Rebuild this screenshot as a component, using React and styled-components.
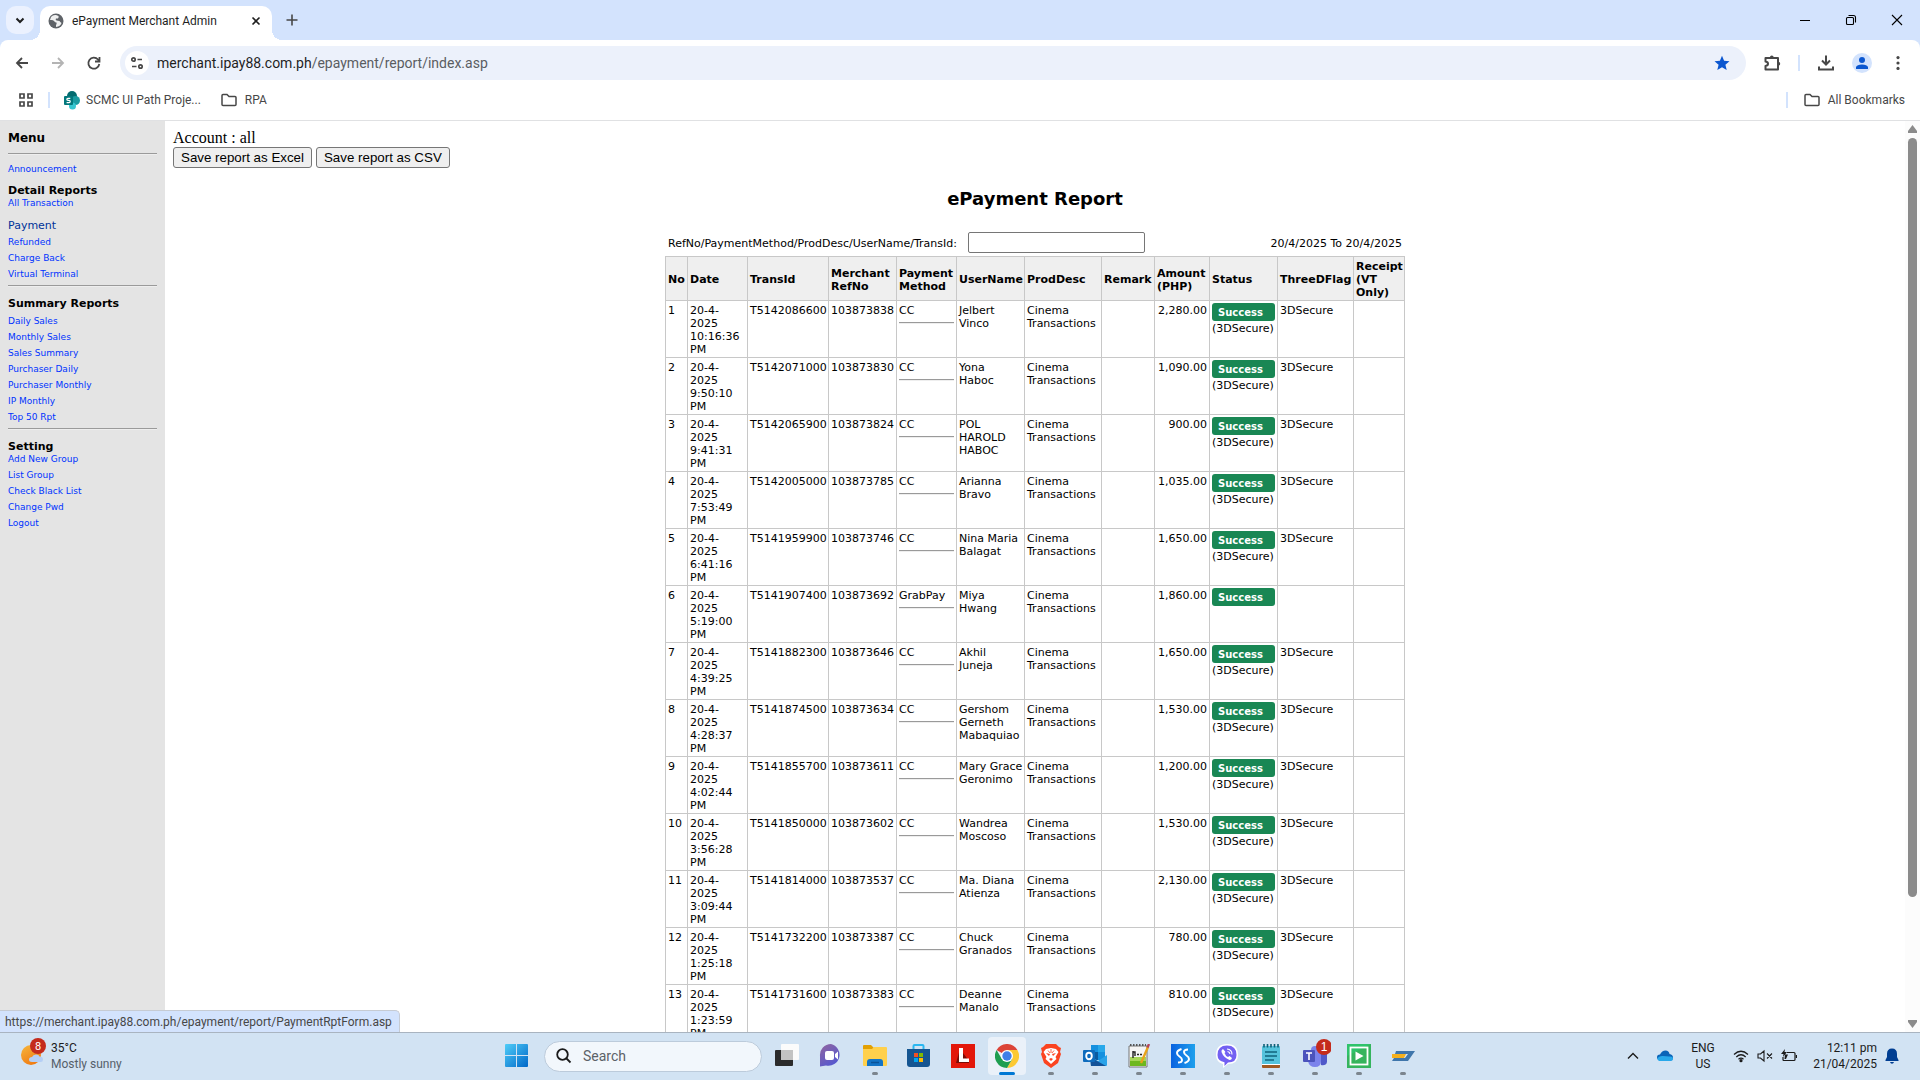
import React from "react";
import styled, { createGlobalStyle } from "styled-components";

const UI = `Roboto, "Noto Sans", sans-serif`;
const VERDANA = `"DejaVu Sans", sans-serif`;

const GlobalStyle = createGlobalStyle`
  * { box-sizing: border-box; }
  body { margin: 0; background: #fff; overflow: hidden; }
  a { text-decoration: none; }
  svg { display: block; flex: none; }
`;

/* ---------- browser chrome ---------- */

const Window = styled.div`
  display: flex;
  flex-direction: column;
  height: 100vh;
  background: #d3e3fd;
  font-family: ${UI};
`;

const TabStrip = styled.header`
  display: flex;
  align-items: flex-end;
  height: 40px;
  padding-left: 6px;
  flex: none;
`;

const IconButton = styled.button`
  display: flex;
  align-items: center;
  justify-content: center;
  width: ${(p) => p.$w || 28}px;
  height: ${(p) => p.$h || 28}px;
  padding: 0;
  border: 0;
  border-radius: ${(p) => (p.$round ? "50%" : "0")};
  background: ${(p) => p.$bg || "transparent"};
  color: ${(p) => p.$color || "#474747"};
  flex: none;
`;

const TabSearch = styled(IconButton)`
  align-self: center;
  margin-right: 6px;
  border-radius: 10px;
`;

const Tab = styled.div`
  position: relative;
  display: flex;
  align-items: center;
  width: 232px;
  height: 34px;
  padding: 0 4px 4px 8px;
  border-radius: 10px 10px 0 0;
  background: #fff;
  color: #1f1f1f;
  font-size: 12px;
  line-height: 16px;

  &::before,
  &::after {
    content: "";
    position: absolute;
    bottom: 0;
    width: 10px;
    height: 10px;
  }
  &::before {
    left: -10px;
    background: radial-gradient(circle at 0 0, transparent 10px, #fff 10px);
  }
  &::after {
    right: -10px;
    background: radial-gradient(circle at 100% 0, transparent 10px, #fff 10px);
  }
`;

const TabTitle = styled.span`
  flex: 1;
  margin-left: 8px;
  white-space: nowrap;
`;

const NewTab = styled(IconButton)`
  align-self: center;
  margin-left: 6px;
`;

const WindowControls = styled.div`
  display: flex;
  margin-left: auto;
  height: 40px;
`;

const Toolbar = styled.div`
  display: flex;
  align-items: center;
  height: 46px;
  padding: 0 4px 0 4px;
  border-radius: 8px 8px 0 0;
  background: #fff;
  flex: none;
`;

const NavGroup = styled.div`
  display: flex;
  gap: 0;
  width: 116px;
`;

const AddressBar = styled.div`
  position: relative;
  display: flex;
  align-items: center;
  flex: 1;
  height: 34px;
  padding: 0 10px 0 5px;
  border-radius: 17px;
  background: #ecf1fb;
`;

const UrlInput = styled.input`
  flex: 1;
  height: 24px;
  margin-left: 8px;
  padding: 0;
  border: 0;
  outline: 0;
  background: transparent;
  color: transparent;
  font: 14px/20px ${UI};
`;

const UrlText = styled.label`
  position: absolute;
  left: 37px;
  color: #5a5d62;
  font-size: 14px;
  line-height: 20px;
  white-space: nowrap;

  b {
    color: #1f1f1f;
    font-weight: 400;
  }
`;

const Actions = styled.div`
  display: flex;
  align-items: center;
  margin-left: 8px;
`;

const Divider = styled.span`
  width: 2px;
  height: 16px;
  margin: ${(p) => p.$m || "0"};
  background: #d3e3fd;
`;

const BookmarksBar = styled.nav`
  display: flex;
  align-items: center;
  height: 35px;
  padding: 0 15px 6px 18px;
  border-bottom: 1px solid #e0e1e3;
  background: #fff;
  flex: none;
`;

const Bookmark = styled.a`
  display: flex;
  align-items: center;
  gap: ${(p) => p.$gap || 6}px;
  margin-left: ${(p) => p.$ml || 0}px;
  color: #474747;
  font-size: 12px;
  line-height: 16px;
  white-space: nowrap;
`;

const Spacer = styled.span`
  flex: 1;
`;

/* ---------- page ---------- */

const Page = styled.div`
  position: relative;
  display: flex;
  flex: 1;
  min-height: 0;
  overflow: hidden;
  background: #fff;
  color: #000;
`;

const Sidebar = styled.nav`
  width: 165px;
  padding: 9px 8px;
  background: #e4e4e4;
  font-family: ${VERDANA};
  flex: none;
`;

const MenuTitle = styled.h1`
  margin: 0;
  font-size: 12px;
  line-height: 16px;
`;

const Rule = styled.hr`
  height: 2px;
  margin: ${(p) => p.$m};
  border: 0;
  border-top: 1px solid #9a9a9a;
  border-bottom: 1px solid #eee;
`;

const SectionTitle = styled.h2`
  margin: 0 0 ${(p) => p.$mb || 0}px;
  font-size: 11px;
  line-height: 12px;
  white-space: nowrap;
`;

const Links = styled.ul`
  display: flex;
  flex-direction: column;
  gap: 4px;
  margin: 0 0 ${(p) => p.$mb || 0}px;
  padding: 0;
  list-style: none;
`;

const LinkItem = styled.li`
  height: 12px;
  font-size: 9px;
  line-height: 12px;
  white-space: nowrap;

  a {
    color: #0033ff;
  }
`;

const CurrentLink = styled.a`
  display: block;
  margin-bottom: 4px;
  color: #003399;
  font-size: 11px;
  line-height: 12px;
`;

const Main = styled.main`
  flex: 1;
  min-width: 0;
  padding: 8px;
  overflow: hidden;
`;

const Account = styled.p`
  margin: 0;
  font: 16px/18px "Liberation Serif", serif;
`;

const ExportBar = styled.div`
  display: flex;
  gap: 4px;
`;

const ExportButton = styled.button`
  height: 21px;
  padding: 0 7px;
  border: 1px solid #767676;
  border-radius: 3px;
  background: #efefef;
  color: #000;
  font-family: "Liberation Sans", sans-serif;
`;

const Report = styled.section`
  width: 740px;
  margin: 20px auto 0;
  font: 11px/13px ${VERDANA};
`;

const ReportTitle = styled.h2`
  margin: 0 0 22px;
  font-size: 18px;
  line-height: 22px;
  text-align: center;
`;

const FilterRow = styled.div`
  display: flex;
  align-items: center;
  gap: 4px;
  margin-bottom: 3px;
  padding: 0 3px;
`;

const FilterLabel = styled.label`
  width: 296px;
  padding-top: 1px;
`;

const FilterInput = styled.input`
  width: 177px;
  height: 21px;
  border: 1px solid #767676;
  border-radius: 2px;
  background: #fff;
`;

const DateRange = styled.span`
  margin-left: auto;
  padding-top: 1px;
`;

const Table = styled.table`
  width: 739px;
  border-collapse: collapse;
  table-layout: fixed;

  th,
  td {
    padding: 3px 0 1px 2px;
    border: 1px solid #c8c8c8;
    text-align: left;
    white-space: pre;
  }
  th {
    background: #efefef;
  }
  td {
    height: 57px;
    vertical-align: top;
  }
`;

const AmountCell = styled.td`
  && {
    padding-right: 2px;
    text-align: right;
  }
`;

const MethodRule = styled.hr`
  height: 2px;
  margin: 5px 2px 0 0;
  border: 0;
  border-top: 1px solid #9a9a9a;
  border-bottom: 1px solid #eee;
`;

const Badge = styled.span`
  display: block;
  width: 63px;
  height: 18px;
  margin: -1px 0 1px;
  padding: 1px 6px 0;
  border-radius: 3px;
  background: #198754;
  color: #fff;
  font-size: 10px;
  font-weight: 700;
  line-height: 18px;
`;

const ScrollTrack = styled.div`
  display: flex;
  flex-direction: column;
  align-items: center;
  width: 15px;
  padding: 4px 0;
  background: #fcfcfc;
  flex: none;
`;

const ScrollThumb = styled.div`
  width: 9px;
  height: 84%;
  margin: 5px 0 auto;
  border-radius: 5px;
  background: #8b8b8b;
`;

const StatusBubble = styled.div`
  position: absolute;
  left: 0;
  bottom: 0;
  height: 22px;
  padding: 0 7px 0 5px;
  border: 1px solid #c6cbd3;
  border-width: 1px 1px 0 0;
  border-radius: 0 5px 0 0;
  background: #d3e3fd;
  color: #474747;
  font-size: 12px;
  line-height: 22px;
`;

/* ---------- taskbar ---------- */

const Taskbar = styled.footer`
  display: grid;
  grid-template-columns: 1fr auto 1fr;
  height: 48px;
  padding-bottom: 1px;
  border-top: 1px solid #a9b4c0;
  background: #d2e3f3;
  color: #1b1b1b;
  font-size: 12px;
  line-height: 16px;
  flex: none;
`;

const Weather = styled.div`
  display: flex;
  align-items: center;
  gap: 5px;
  padding-left: 20px;
`;

const Stack = styled.div`
  text-align: ${(p) => p.$align || "left"};
  width: ${(p) => (p.$w ? p.$w + "px" : "auto")};
  white-space: nowrap;

  span {
    display: block;
  }
`;

const Muted = styled.span`
  color: #55606a;
`;

const Apps = styled.div`
  display: flex;
  align-items: center;
`;

const AppButton = styled.button`
  position: relative;
  display: flex;
  align-items: center;
  justify-content: center;
  width: 38px;
  height: 38px;
  margin: 0 3px;
  padding: 0;
  border: 0;
  border-radius: 4px;
  background: ${(p) => (p.$active ? "#eaf1f9" : "transparent")};

  &::after {
    content: "";
    position: absolute;
    bottom: 0;
    width: ${(p) => (p.$active ? 16 : p.$running ? 6 : 0)}px;
    height: 3px;
    border-radius: 2px;
    background: ${(p) => (p.$active ? "#0078d4" : "#7c858e")};
  }
`;

const SearchBox = styled.label`
  display: flex;
  align-items: center;
  gap: 11px;
  width: 218px;
  height: 31px;
  margin: 0 3px 0 5px;
  padding: 0 11px;
  border: 1px solid #bccbdb;
  border-radius: 16px;
  background: #f2f7fc;

  input {
    width: 150px;
    padding: 0;
    border: 0;
    outline: 0;
    background: transparent;
    font: 14px/20px ${UI};
  }
  input::placeholder {
    color: #5c6268;
    opacity: 1;
  }
`;

const Tray = styled.div`
  display: flex;
  align-items: center;
  justify-content: flex-end;
  padding-right: 21px;
`;

const TrayIcons = styled.div`
  display: flex;
  align-items: center;
  gap: ${(p) => p.$gap}px;
  margin: 0 ${(p) => p.$mr}px 0 ${(p) => p.$ml || 0}px;
`;

const Notifications = styled(IconButton)`
  margin-left: 8px;
`;

/* ---------- data ---------- */

const detailLinks = ["Refunded", "Charge Back", "Virtual Terminal"];
const summaryLinks = ["Daily Sales", "Monthly Sales", "Sales Summary", "Purchaser Daily", "Purchaser Monthly", "IP Monthly", "Top 50 Rpt"];
const settingLinks = ["Add New Group", "List Group", "Check Black List", "Change Pwd", "Logout"];

const columns = [
  ["No", 22], ["Date", 60], ["TransId", 81], ["Merchant\nRefNo", 68], ["Payment\nMethod", 60], ["UserName", 68],
  ["ProdDesc", 77], ["Remark", 53], ["Amount\n(PHP)", 55], ["Status", 68], ["ThreeDFlag", 76], ["Receipt\n(VT\nOnly)", 51],
];

const rows = [
  ["10:16:36", "T5142086600", "103873838", "CC", "Jelbert\nVinco", "2,280.00"],
  ["9:50:10", "T5142071000", "103873830", "CC", "Yona\nHaboc", "1,090.00"],
  ["9:41:31", "T5142065900", "103873824", "CC", "POL\nHAROLD\nHABOC", "900.00"],
  ["7:53:49", "T5142005000", "103873785", "CC", "Arianna\nBravo", "1,035.00"],
  ["6:41:16", "T5141959900", "103873746", "CC", "Nina Maria\nBalagat", "1,650.00"],
  ["5:19:00", "T5141907400", "103873692", "GrabPay", "Miya\nHwang", "1,860.00"],
  ["4:39:25", "T5141882300", "103873646", "CC", "Akhil\nJuneja", "1,650.00"],
  ["4:28:37", "T5141874500", "103873634", "CC", "Gershom\nGerneth\nMabaquiao", "1,530.00"],
  ["4:02:44", "T5141855700", "103873611", "CC", "Mary Grace\nGeronimo", "1,200.00"],
  ["3:56:28", "T5141850000", "103873602", "CC", "Wandrea\nMoscoso", "1,530.00"],
  ["3:09:44", "T5141814000", "103873537", "CC", "Ma. Diana\nAtienza", "2,130.00"],
  ["1:25:18", "T5141732200", "103873387", "CC", "Chuck\nGranados", "780.00"],
  ["1:23:59", "T5141731600", "103873383", "CC", "Deanne\nManalo", "810.00"],
];

/* ---------- icons ---------- */

const Line = ({ d, size = 16, w = 2, children, ...rest }) => (
  <svg width={size} height={size} viewBox={`0 0 ${size} ${size}`} fill="none" stroke="currentColor" strokeWidth={w} {...rest}>
    <path d={d} />
    {children}
  </svg>
);

const Folder = () => (
  <Line d="M1 3.5Q1 2.5 2 2.5H6L8 4.5H14Q15 4.5 15 5.5V12.5Q15 13.5 14 13.5H2Q1 13.5 1 12.5Z" w={1.5} />
);

const Globe = () => (
  <svg width="16" height="16" viewBox="0 0 16 16">
    <circle cx="8" cy="8" r="7.5" fill="#5f6368" />
    <path d="M8 2Q5 1.500 3 4L2 7Q5 6.500 6 8T8.500 9.500Q9 11 8 12L8 14Q12.500 13.500 13.500 10Q12 9 11.500 8L8.500 7.500Q7 6.500 8 5.500H10Q11 4 10.500 3Z" fill="#fff" opacity=".9" />
  </svg>
);

const SharePoint = () => (
  <svg width="16" height="19" viewBox="0 0 16 19">
    <circle cx="8" cy="5" r="5" fill="#036c70" />
    <circle cx="11.500" cy="9.500" r="4.500" fill="#1a9ba1" />
    <circle cx="8.500" cy="15" r="3.500" fill="#37c6d0" />
    <rect y="5" width="9" height="9" rx="1" fill="#03787c" />
    <path d="M6.300 7.300H4Q2.800 7.300 2.800 8.300T4 9.400H5Q6.200 9.400 6.200 10.500T5 11.700H2.600" fill="none" stroke="#fff" strokeWidth="1.200" />
  </svg>
);

const Puzzle = () => (
  <Line size={18} w={2} d="M2.500 4H15V15.500H2.500V12Q5 11.500 5 9.700T2.500 7.500Z" strokeLinejoin="round">
    <path d="M7 3Q7 1.500 8.800 1.500T10.600 3ZM16 8Q17.200 8 17.200 9.700T16 11.500Z" fill="currentColor" stroke="none" />
  </Line>
);

const WeatherIcon = () => (
  <svg width="26" height="36" viewBox="0 0 26 36">
    <defs>
      <linearGradient id="sun" x1="0" y1="0" x2=".5" y2="1"><stop stopColor="#f6b73c" /><stop offset="1" stopColor="#f07d13" /></linearGradient>
    </defs>
    <circle cx="11" cy="17" r="10" fill="url(#sun)" />
    <path d="M12 24Q9 24 9 21.500T12 19Q13 16.500 16 16.500T19.500 18.500Q23 18.500 23 21.500T20 24Z" fill="#b5cff5" />
    <circle cx="18" cy="8" r="8" fill="#c42b1c" />
    <text x="18" y="12" textAnchor="middle" fill="#fff" fontSize="11">8</text>
  </svg>
);

const appIcons = {
  start: (
    <>
      <defs><linearGradient id="win" x1="0" y1="0" x2="1" y2="1"><stop stopColor="#4fcdf8" /><stop offset="1" stopColor="#0067c8" /></linearGradient></defs>
      <path d="M1 0H11V11H0V1Q0 0 1 0ZM12 0H22Q23 0 23 1V11H12ZM0 12H11V23H1Q0 23 0 22ZM12 12H23V22Q23 23 22 23H12Z" fill="url(#win)" />
    </>
  ),
  task: (
    <>
      <rect y="6" width="18" height="16" rx="1" fill="#2b2b2b" />
      <rect x="6" width="18" height="16" rx="1" fill="#fbfbfb" />
      <rect x="6" y="6" width="12" height="10" fill="#c3c3c3" />
    </>
  ),
  chat: (
    <>
      <defs><linearGradient id="chat" x1="0" y1="0" x2=".6" y2="1"><stop stopColor="#92669f" /><stop offset="1" stopColor="#5558cf" /></linearGradient></defs>
      <path d="M12 0A11 11 0 1 1 7 21.500L1 22.500V12A11 11 0 0 1 12 0Z" fill="url(#chat)" />
      <rect x="6" y="7" width="9" height="9" rx="2" fill="#fff" /><path d="M16 10L19 7.500V15.500L16 13Z" fill="#fff" />
    </>
  ),
  files: (
    <>
      <path d="M0 2Q0 1 1 1H8L11 4H23Q24 4 24 5V12H0Z" fill="#e3a002" />
      <path d="M0 5H9L11 3H23Q24 3 24 4V21Q24 22 23 22H1Q0 22 0 21Z" fill="#ffd04c" />
      <path d="M4 22V18Q4 15 7 15H17Q20 15 20 18V22Z" fill="#1374c6" /><path d="M8 18.500H16" stroke="#0a5398" strokeWidth="1.500" />
    </>
  ),
  store: (
    <>
      <path d="M6.500 6V2Q6.500 1 7.500 1H15.500Q16.500 1 16.500 2V6" fill="none" stroke="#2bb7f0" strokeWidth="2" />
      <path d="M0 5H23V20Q23 23 20 23H3Q0 23 0 20Z" fill="#155591" />
      <path d="M7 9H11V13H7Z" fill="#f25022" /><path d="M12 9H16V13H12Z" fill="#7fba00" />
      <path d="M7 14H11V18H7Z" fill="#00a4ef" /><path d="M12 14H16V18H12Z" fill="#ffb900" />
    </>
  ),
  lred: (
    <>
      <rect width="24" height="24" fill="#e3170a" />
      <path d="M9 5L5 19H18V17Z" fill="#7a0c05" /><path d="M8 4H12V14.500H18V18H8Z" fill="#fff" />
    </>
  ),
  chrome: (
    <>
      <path d="M12 12L1.600 6A12 12 0 0 1 22.400 6Z" fill="#dc4437" />
      <path d="M12 6H22.400A12 12 0 0 1 12 24L17.200 15Z" fill="#fcc934" />
      <path d="M6.800 15L1.600 6A12 12 0 0 0 12 24L17.200 15Z" fill="#1e9e50" />
      <circle cx="12" cy="12" r="6" fill="#fff" /><circle cx="12" cy="12" r="4.700" fill="#3f7fe8" />
    </>
  ),
  brave: (
    <>
      <path d="M7 0H17L20 3L22 4L21 8L22 10L19 19L12 24L5 19L2 10L3 8L2 4L4 3Z" fill="#fb4420" />
      <path d="M7 5L12 4L17 5L19.500 8L16.500 13L17.500 15L12 20L6.500 15L7.500 13L4.500 8Z" fill="#fff" />
      <path d="M7 9L11 10L10 12ZM17 9L13 10L14 12ZM10 15L12 14L14 15L12 17Z" fill="#fb4420" />
      <path d="M12 5V9M9 6.500L11 9M15 6.500L13 9" stroke="#fb4420" strokeWidth=".8" />
    </>
  ),
  outlook: (
    <>
      <rect x="8" y="1" width="14" height="15" fill="#1490df" /><path d="M15 1H22V8H15Z" fill="#28a8ea" />
      <path d="M8 8H15V16H8Z" fill="#0b5a9f" /><path d="M7 12L15 17L24 11V21Q24 22 23 22H8Z" fill="#2ba3e8" /><path d="M7 13L23 22H8Z" fill="#135298" />
      <rect y="6" width="12" height="12" rx="1" fill="#0f6cbd" /><ellipse cx="6" cy="12" rx="2.800" ry="3.200" fill="none" stroke="#fff" strokeWidth="1.900" />
    </>
  ),
  npp: (
    <>
      <path d="M2 2H20V23H2Z" fill="#f5f5f5" stroke="#777" /><path d="M3 13H19V22H3Z" fill="#6db81e" /><path d="M3 13H19V17H3Z" fill="#a5d656" />
      <path d="M3 1H19" stroke="#555" strokeWidth="2" strokeDasharray="1.500 1.500" />
      <path d="M6 14V7M6 8H8V12M10 10.500H12M13 10.500H15" stroke="#222" strokeWidth="1.400" fill="none" />
      <path d="M14 19L21 3" stroke="#e8a31b" strokeWidth="2.400" /><path d="M20.500 3.500L22 0" stroke="#b5445a" strokeWidth="2.400" />
    </>
  ),
  sblue: (
    <>
      <defs><linearGradient id="sb"><stop stopColor="#0a62e0" /><stop offset="1" stopColor="#1ea0ec" /></linearGradient></defs>
      <rect width="24" height="24" fill="url(#sb)" />
      <path d="M10.500 5Q6 6.500 6 9Q6 11 8.500 12.500Q11 14 11 16Q11 18.500 7 18.500M13.500 19Q18 17.500 18 15Q18 13 15.500 11.500Q13 10 13 8Q13 5.500 17 5.500" fill="none" stroke="#fff" strokeWidth="2" />
    </>
  ),
  viber: (
    <>
      <path d="M12 0Q23 0 23 11Q23 20 13 20L8 24V20Q1 18 1 11Q1 0 12 0Z" fill="#fff" />
      <path d="M12 1.500Q21.500 1.500 21.500 11Q21.500 18.500 13 18.500L9.500 22V18.200Q2.500 17 2.500 11Q2.500 1.500 12 1.500Z" fill="#7360f2" />
      <path d="M8 5Q6 6 6.500 8Q8.500 13.500 14.500 16Q16.500 16.200 17 14L14.500 12L13 13Q10.500 12 9.500 9L10.500 8Z" fill="#fff" />
      <path d="M12 5Q17 5.500 17 10.500M12.500 7.500Q14.800 8 15 10" fill="none" stroke="#fff" strokeWidth="1.100" />
    </>
  ),
  notepad: (
    <>
      <rect x="3" y="2" width="18" height="19" rx="1" fill="#55c3dc" /><path d="M3 21H21V23Q21 24 20 24H4Q3 24 3 23Z" fill="#a05a22" /><path d="M3 20.500H21" stroke="#fff" />
      <path d="M5 3.500V0M8.500 3.500V0M12 3.500V0M15.500 3.500V0M19 3.500V0" stroke="#0f5f76" strokeWidth="1.600" />
      <path d="M6 8H18M6 12H18M6 16H15" stroke="#11647c" strokeWidth="1.600" />
    </>
  ),
  camtasia: (
    <>
      <rect width="24" height="24" fill="#2fc36b" /><path d="M0 12L24 0V24H0Z" fill="#35b45d" />
      <rect x="3.500" y="3.500" width="17" height="17" fill="none" stroke="#fff" strokeWidth="1.800" /><path d="M8.500 7.500L16.500 12L8.500 16.500Z" fill="#fff" />
    </>
  ),
  swoosh: (
    <>
      <path d="M5 7H24L17 17H1L3 14H14L17 10H4Z" fill="#3f76ab" /><path d="M1 10H15L13 14H1Z" fill="#f5b01d" />
    </>
  ),
};

const AppIcon = ({ name }) => (
  <svg width="24" height="24" viewBox="0 0 24 24">{appIcons[name]}</svg>
);

const TeamsIcon = () => (
  <svg width="32" height="34" viewBox="0 0 32 34">
    <circle cx="16" cy="11" r="4" fill="#7b83eb" /><circle cx="25" cy="13" r="3" fill="#5059c9" />
    <path d="M21 14H28V23Q27 27 22 26Z" fill="#5059c9" /><path d="M10 14H22V22Q22 28 16 28T9 22Z" fill="#7b83eb" />
    <rect x="4" y="11" width="12" height="12" rx="1" fill="#4b53bc" /><path d="M7 14H13M10 14V21" stroke="#fff" strokeWidth="1.600" />
    <circle cx="25" cy="8" r="8" fill="#c42b1c" />
    <text x="25" y="12" textAnchor="middle" fill="#fff" fontSize="12">1</text>
  </svg>
);

const runningApps = [
  ["brave", "Brave"], ["outlook", "Outlook"], ["npp", "Notepad++"], ["sblue", "Capture"], ["viber", "Viber"], ["notepad", "Notepad"],
];

/* ---------- composition ---------- */

const NavLinks = ({ items, mb }) => (
  <Links $mb={mb}>
    {items.map((t) => (
      <LinkItem key={t}><a href="#">{t}</a></LinkItem>
    ))}
  </Links>
);

export default function App() {
  return (
    <Window>
      <GlobalStyle />
      <TabStrip>
        <TabSearch $bg="#ebf1fe" $color="#1f1f1f" aria-label="Search tabs">
          <Line d="M4.500 6.500L8 10L11.500 6.500" />
        </TabSearch>
        <Tab>
          <Globe />
          <TabTitle>ePayment Merchant Admin</TabTitle>
          <IconButton $w={24} $h={24} $color="#1f1f1f" aria-label="Close tab">
            <Line d="M4.500 4.500L11.500 11.500M11.500 4.500L4.500 11.500" w={1.6} />
          </IconButton>
        </Tab>
        <NewTab aria-label="New tab"><Line d="M8 2.500V13.500M2.500 8H13.500" w={1.6} /></NewTab>
        <WindowControls>
          <IconButton $w={46} $h={40} $color="#000" aria-label="Minimise"><Line d="M3 8.500H13" w={1} /></IconButton>
          <IconButton $w={46} $h={40} $color="#000" aria-label="Restore">
            <Line d="M3.500 6.500Q3.500 5.500 4.500 5.500H9.500Q10.500 5.500 10.500 6.500V11.500Q10.500 12.500 9.500 12.500H4.500Q3.500 12.500 3.500 11.500ZM5.500 3.500H10.500Q12.500 3.500 12.500 5.500V10.500" w={1.1} />
          </IconButton>
          <IconButton $w={46} $h={40} $color="#000" aria-label="Close"><Line d="M3 3L13 13M13 3L3 13" w={1.1} /></IconButton>
        </WindowControls>
      </TabStrip>

      <Toolbar>
        <NavGroup>
          <IconButton $w={36} aria-label="Back"><Line d="M14 8H3M8 3L3 8L8 13" w={1.8} /></IconButton>
          <IconButton $w={36} $color="#b4b4b4" aria-label="Forward"><Line d="M2 8H13M8 3L13 8L8 13" w={1.8} /></IconButton>
          <IconButton $w={36} aria-label="Reload"><Line d="M13.300 9A5.500 5.500 0 1 1 12 4.500L13.500 6M13.500 2V6.500H9" w={1.8} /></IconButton>
        </NavGroup>
        <AddressBar>
          <IconButton $w={24} $h={24} $round $bg="#fff" aria-label="Site information">
            <Line d="M8.500 4.500H13M3 11.500H7.500" w={1.7}>
              <circle cx="4.500" cy="4.500" r="1.700" /><circle cx="11.500" cy="11.500" r="1.700" />
            </Line>
          </IconButton>
          <UrlInput id="url" aria-label="Address" />
          <UrlText htmlFor="url"><b>merchant.ipay88.com.ph</b>/epayment/report/index.asp</UrlText>
          <IconButton $color="#0b57d0" aria-label="Bookmark this tab">
            <svg width="16" height="16" viewBox="0 0 16 16" fill="currentColor"><path d="M8 .8L10.100 5.700L15.500 6.200L11.400 9.700L12.700 15L8 12.200L3.300 15L4.600 9.700L.5 6.200L5.900 5.700Z" /></svg>
          </IconButton>
        </AddressBar>
        <Actions>
          <IconButton $w={36} aria-label="Extensions"><Puzzle /></IconButton>
          <Divider $m="0 8px" />
          <IconButton $w={36} aria-label="Downloads">
            <Line d="M8 0.500V9M4 5.500L8 9.500L12 5.500M1 11.500V14.500H15V11.500" />
          </IconButton>
          <IconButton $w={36} aria-label="Profile">
            <svg width="20" height="20" viewBox="0 0 20 20"><circle cx="10" cy="10" r="10" fill="#d3e3fd" /><path d="M10 4A3 3 0 1 1 10 10A3 3 0 0 1 10 4ZM4 16V14Q5 11.500 10 11.500T16 14V16Z" fill="#0b57d0" /></svg>
          </IconButton>
          <IconButton $w={36} aria-label="Menu">
            <svg width="16" height="16" viewBox="0 0 16 16" fill="currentColor"><circle cx="8" cy="2.600" r="1.600" /><circle cx="8" cy="8" r="1.600" /><circle cx="8" cy="13.400" r="1.600" /></svg>
          </IconButton>
        </Actions>
      </Toolbar>

      <BookmarksBar>
        <Bookmark href="#" aria-label="Apps"><Line d="M2 2H6V6H2ZM10 2H14V6H10ZM2 10H6V14H2ZM10 10H14V14H10Z" w={1.7} /></Bookmark>
        <Divider $m="0 0 0 14px" />
        <Bookmark href="#" $ml={14}><SharePoint />SCMC UI Path Proje...</Bookmark>
        <Bookmark href="#" $ml={20} $gap={8}><Folder />RPA</Bookmark>
        <Spacer />
        <Divider $m="0 16px 0 0" />
        <Bookmark href="#" $gap={8}><Folder />All Bookmarks</Bookmark>
      </BookmarksBar>

      <Page>
        <Sidebar>
          <MenuTitle>Menu</MenuTitle>
          <Rule $m="7px 0 8px" />
          <NavLinks items={["Announcement"]} mb={10} />
          <SectionTitle>Detail Reports</SectionTitle>
          <NavLinks items={["All Transaction"]} mb={11} />
          <CurrentLink href="#">Payment</CurrentLink>
          <NavLinks items={detailLinks} />
          <Rule $m="5px 0 11px" />
          <SectionTitle $mb={5}>Summary Reports</SectionTitle>
          <NavLinks items={summaryLinks} />
          <Rule $m="5px 0 11px" />
          <SectionTitle>Setting</SectionTitle>
          <NavLinks items={settingLinks} />
        </Sidebar>

        <Main>
          <Account>Account : all</Account>
          <ExportBar>
            <ExportButton>Save report as Excel</ExportButton>
            <ExportButton>Save report as CSV</ExportButton>
          </ExportBar>
          <Report>
            <ReportTitle>ePayment Report</ReportTitle>
            <FilterRow>
              <FilterLabel htmlFor="filter">RefNo/PaymentMethod/ProdDesc/UserName/TransId:</FilterLabel>
              <FilterInput id="filter" />
              <DateRange>20/4/2025 To 20/4/2025</DateRange>
            </FilterRow>
            <Table>
              <colgroup>
                {columns.map(([name, width]) => <col key={name} width={width} />)}
              </colgroup>
              <thead>
                <tr>{columns.map(([name]) => <th key={name}>{name}</th>)}</tr>
              </thead>
              <tbody>
                {rows.map(([time, trans, ref, method, user, amount], i) => (
                  <tr key={trans}>
                    <td>{i + 1}</td>
                    <td>{`20-4-\n2025\n${time}\nPM`}</td>
                    <td>{trans}</td>
                    <td>{ref}</td>
                    <td>{method}<MethodRule /></td>
                    <td>{user}</td>
                    <td>{"Cinema\nTransactions"}</td>
                    <td />
                    <AmountCell>{amount}</AmountCell>
                    <td><Badge>Success</Badge>{method === "CC" && "(3DSecure)"}</td>
                    <td>{method === "CC" && "3DSecure"}</td>
                    <td />
                  </tr>
                ))}
              </tbody>
            </Table>
          </Report>
        </Main>

        <ScrollTrack>
          <svg width="9" height="8" viewBox="0 0 9 8"><path d="M4.500 0L9 6V8H0V6Z" fill="#8b8b8b" /></svg>
          <ScrollThumb />
          <svg width="9" height="8" viewBox="0 0 9 8"><path d="M4.500 8L9 2V0H0V2Z" fill="#8b8b8b" /></svg>
        </ScrollTrack>
        <StatusBubble>https://merchant.ipay88.com.ph/epayment/report/PaymentRptForm.asp</StatusBubble>
      </Page>

      <Taskbar>
        <Weather>
          <WeatherIcon />
          <Stack><span>35°C</span><Muted>Mostly sunny</Muted></Stack>
        </Weather>
        <Apps>
          <AppButton aria-label="Start"><AppIcon name="start" /></AppButton>
          <SearchBox>
            <Line d="M10.500 10.500L14.500 14.500" w={1.8}><circle cx="6.500" cy="6.500" r="5.300" /></Line>
            <input placeholder="Search" aria-label="Search" />
          </SearchBox>
          <AppButton aria-label="Task view"><AppIcon name="task" /></AppButton>
          <AppButton aria-label="Chat"><AppIcon name="chat" /></AppButton>
          <AppButton $running aria-label="File Explorer"><AppIcon name="files" /></AppButton>
          <AppButton aria-label="Store"><AppIcon name="store" /></AppButton>
          <AppButton aria-label="Lenovo"><AppIcon name="lred" /></AppButton>
          <AppButton $active aria-label="Chrome"><AppIcon name="chrome" /></AppButton>
          {runningApps.map(([name, label]) => (
            <AppButton key={name} $running aria-label={label}><AppIcon name={name} /></AppButton>
          ))}
          <AppButton $running aria-label="Teams"><TeamsIcon /></AppButton>
          <AppButton $running aria-label="Camtasia"><AppIcon name="camtasia" /></AppButton>
          <AppButton $running aria-label="SAP Logon"><AppIcon name="swoosh" /></AppButton>
        </Apps>
        <Tray>
          <TrayIcons $gap={16} $mr={13}>
            <Line d="M3 10.500L8 5.500L13 10.500" w={1.4} />
            <svg width="16" height="16" viewBox="0 0 16 16">
              <path d="M3 12Q0 12 0 9.300T3 6.500Q5 2.500 8.500 2.500T12.500 6Q16 6.500 16 9.500T13 13H3Z" fill="#0a64b8" /><path d="M2 13Q0 12 0.500 10Q3 7.500 6 8L12 8.500Q16 8 16 10.500T13 13Z" fill="#28a8ea" />
            </svg>
          </TrayIcons>
          <Stack $align="center" $w={34}><span>ENG</span><span>US</span></Stack>
          <TrayIcons $gap={8} $ml={13} $mr={16}>
            <Line d="M1 6.500Q8 0 15 6.500M3.300 9Q8 4.500 12.700 9M5.500 11.300Q8 9 10.500 11.300" w={1.2}><circle cx="8" cy="12.700" r="1" fill="currentColor" /></Line>
            <Line d="M1 6H3.500L7 3V13L3.500 10H1ZM10 5.500L15 10.500M15 5.500L10 10.500" w={1.1} />
            <Line d="M6 4.500H13Q14 4.500 14 5.500V11.500Q14 12.500 13 12.500H3Q2 12.500 2 11.500V9M15.500 7V10" w={1.2}>
              <path d="M4 1L0 6H2.500L2 9L6 4H3.500ZM4 6.500H7L5 11H3.500Z" fill="currentColor" stroke="none" />
            </Line>
          </TrayIcons>
          <Stack $align="right" $w={64}><span>12:11 pm</span><span>21/04/2025</span></Stack>
          <Notifications $w={14} $h={16} $color="#003e92" aria-label="Notifications">
            <svg width="14" height="16" viewBox="0 0 14 16" fill="currentColor"><path d="M7 .5Q12 .5 12 6V9L13.500 12V13H.5V12L2 9V6Q2 .5 7 .5ZM5 14H9Q8.500 15.700 7 15.700T5 14Z" /></svg>
          </Notifications>
        </Tray>
      </Taskbar>
    </Window>
  );
}
